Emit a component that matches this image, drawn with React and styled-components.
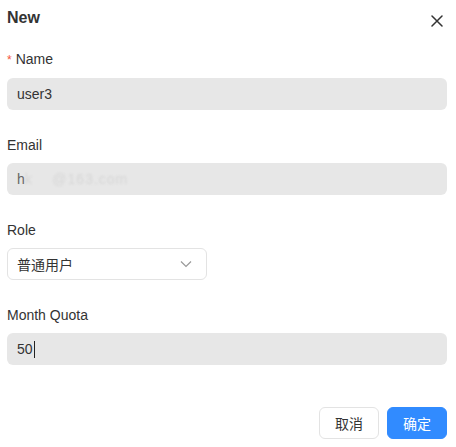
import React from 'react';
import styled, { createGlobalStyle } from 'styled-components';

const GlobalStyle = createGlobalStyle`
  html, body {
    margin: 0;
    padding: 0;
    background: #fff;
  }
  body {
    font-family: "Liberation Sans", "Noto Sans CJK SC", sans-serif;
    color: #333;
  }
`;

const Dialog = styled.div`
  width: 456px;
  height: 447px;
  box-sizing: border-box;
  padding: 8px 9px 8px 7px;
  display: flex;
  flex-direction: column;
`;

const Header = styled.div`
  display: flex;
  justify-content: space-between;
  align-items: center;
  height: 20px;
  margin-bottom: 21px;
`;

const Title = styled.h2`
  margin: 0;
  font-size: 16px;
  font-weight: 700;
  color: #333;
`;

const CloseButton = styled.button`
  border: 0;
  background: none;
  padding: 0;
  width: 20px;
  height: 20px;
  display: flex;
  align-items: center;
  justify-content: center;
  cursor: pointer;
  margin-right: 0;
  margin-top: 5px;
`;

const Field = styled.div`
  display: flex;
  flex-direction: column;
  margin-bottom: 25px;
`;

const Label = styled.label`
  font-size: 14px;
  line-height: 20px;
  color: #333;
  margin-bottom: 8px;
`;

const Required = styled.span`
  color: #f5553b;
  margin-right: 4px;
  font-size: 12px;
`;

const Input = styled.div`
  height: 32px;
  box-sizing: border-box;
  background: #e7e7e7;
  border-radius: 6px;
  padding: 0 10px;
  display: flex;
  align-items: center;
  font-size: 14px;
  color: #333;
`;

const Caret = styled.span`
  display: inline-block;
  width: 1px;
  height: 17px;
  background: #222;
  margin-left: 1px;
`;

const Blurred = styled.span`
  color: #d6d6d6;
  filter: blur(0.8px);
  letter-spacing: 1px;
`;

const Select = styled.div`
  width: 200px;
  height: 32px;
  box-sizing: border-box;
  border: 1px solid #e3e3e3;
  border-radius: 6px;
  padding: 0 14px 0 9px;
  display: flex;
  align-items: center;
  justify-content: space-between;
  font-size: 14px;
  color: #333;
`;

const Footer = styled.div`
  margin-top: auto;
  display: flex;
  justify-content: flex-end;
  gap: 8px;
`;

const Button = styled.button`
  width: 60px;
  height: 32px;
  border-radius: 6px;
  font-family: inherit;
  font-size: 14px;
  border: 1px solid ${({ primary }) => (primary ? '#318bff' : '#e3e3e3')};
  background: ${({ primary }) => (primary ? '#318bff' : '#fff')};
  color: ${({ primary }) => (primary ? '#fff' : '#333')};
  cursor: pointer;
`;

const App = () => (
  <>
    <GlobalStyle />
    <Dialog>
      <Header>
        <Title>New</Title>
        <CloseButton aria-label="close">
          <svg width="12" height="12" viewBox="0 0 12 12">
            <path d="M1 1L11 11M11 1L1 11" stroke="#333" strokeWidth="1.5" strokeLinecap="round" />
          </svg>
        </CloseButton>
      </Header>

      <Field>
        <Label><Required>*</Required>Name</Label>
        <Input>user3</Input>
      </Field>

      <Field>
        <Label>Email</Label>
        <Input>
          <span style={{ color: '#666' }}>h</span>
          <Blurred>k&nbsp;&nbsp;&nbsp;&nbsp;@163.com</Blurred>
        </Input>
      </Field>

      <Field>
        <Label>Role</Label>
        <Select>
          普通用户
          <svg width="12" height="8" viewBox="0 0 12 8">
            <path d="M1 1.5L6 6.5L11 1.5" fill="none" stroke="#999" strokeWidth="1.2" />
          </svg>
        </Select>
      </Field>

      <Field>
        <Label>Month Quota</Label>
        <Input>50<Caret /></Input>
      </Field>

      <Footer>
        <Button>取消</Button>
        <Button primary>确定</Button>
      </Footer>
    </Dialog>
  </>
);

export default App;
